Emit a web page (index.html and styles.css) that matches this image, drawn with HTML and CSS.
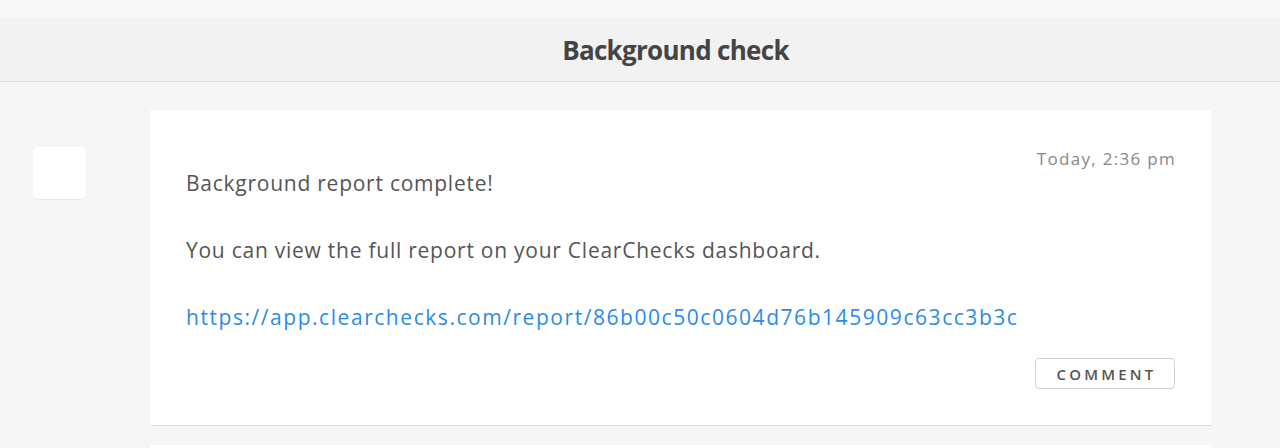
FILE: index.html
```html
<!DOCTYPE html>
<html>
<head>
<meta charset="utf-8">
<link rel="stylesheet" href="styles.css">
</head>
<body>
<div class="topband"></div>
<header class="header"><h1 class="title">Background check</h1></header>
<main class="content">
  <div class="row">
    <div class="avatar-col"><div class="avatar"></div></div>
    <article class="card">
      <div class="card-top">
        <p class="line first">Background report complete!</p>
        <span class="time">Today, 2:36 pm</span>
      </div>
      <p class="line">You can view the full report on your ClearChecks dashboard.</p>
      <p class="line"><a class="link" href="#">https://app.clearchecks.com/report/86b00c50c0604d76b145909c63cc3b3c</a></p>
      <div class="actions"><button class="btn">COMMENT</button></div>
    </article>
  </div>
  <div class="row">
    <div class="avatar-col"></div>
    <article class="card next"></article>
  </div>
</main>
</body>
</html>
```
FILE: styles.css
```css
* { box-sizing: border-box; }
html, body { margin: 0; padding: 0; }
body {
  background: #f6f6f6;
  font-family: "Open Sans", "Noto Sans", sans-serif;
  color: #555;
  height: 448px;
  overflow: hidden;
}
.topband { height: 18px; background: #f8f8f8; }
.header {
  height: 64px;
  background: #f2f2f2;
  border-bottom: 1px solid #e0e0e0;
  display: flex;
  align-items: center;
  justify-content: center;
  padding-left: 71px;
}
.title {
  margin: 0;
  font-size: 26px;
  font-weight: 700;
  color: #444;
  letter-spacing: -0.7px;
}
.content { padding-top: 28px; }
.row { display: flex; }
.avatar-col { width: 150px; flex: none; padding: 37px 0 0 33px; }
.avatar {
  width: 53px; height: 52px;
  background: #fff;
  border-radius: 5px;
  box-shadow: 0 1px 1px rgba(0,0,0,0.06);
}
.card {
  width: 1061px;
  background: #fff;
  border-bottom: 1px solid #dddddd;
  padding: 38px 36px 36px 36px;
}
.card.next { height: 20px; margin-top: 19px; padding: 0; border: none; }
.card-top { display: flex; justify-content: space-between; align-items: flex-start; }
.line { margin: 0; font-size: 21px; line-height: 26px; letter-spacing: 0.75px; }
.first { margin-top: 22px; }
.line + .line, .card-top + .line { margin-top: 41px; }
.time { font-size: 17px; color: #888; line-height: 22px; letter-spacing: 1.3px; margin-right: -1px; }
.link { color: #2a8bea; text-decoration: none; letter-spacing: 1.55px; }
.actions { display: flex; justify-content: flex-end; margin-top: 28px; }
.btn {
  width: 140px; height: 31px;
  background: #fff;
  border: 1px solid #d0d0d0;
  border-radius: 4px;
  font-family: inherit;
  font-size: 15px;
  letter-spacing: 3.2px;
  color: #555;
  font-weight: 600;
  padding: 0 0 0 3px;
}
```
